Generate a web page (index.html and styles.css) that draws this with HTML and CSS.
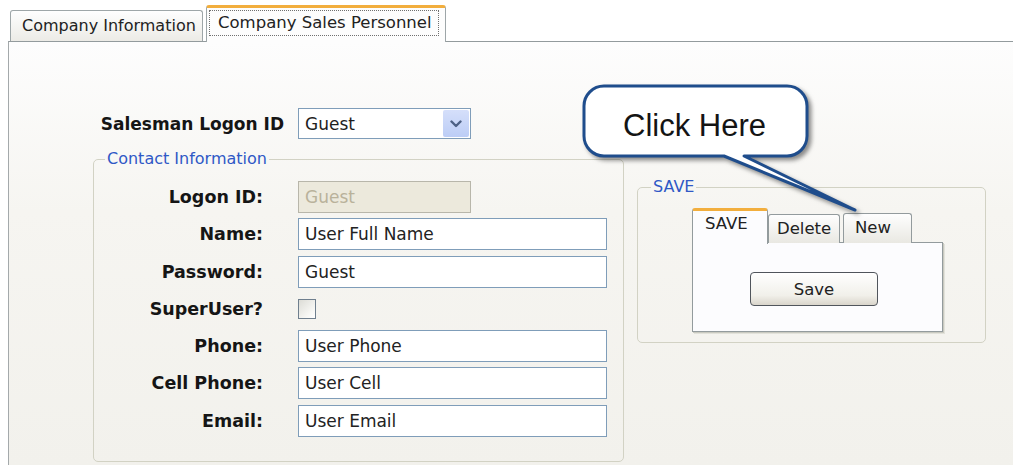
FILE: index.html
```html
<!DOCTYPE html>
<html lang="en">
<head>
<meta charset="utf-8">
<title>Company Sales Personnel</title>
<link rel="stylesheet" href="styles.css">
</head>
<body>
<div class="window">
  <div class="tabstrip">
    <div class="tab">Company Information</div>
    <div class="tab tab-active"><span class="focus">Company Sales Personnel</span></div>
  </div>

  <div class="page">
    <div class="left">
      <div class="logon-row">
        <label class="big-label">Salesman Logon ID</label>
        <div class="combo">
          <span class="combo-text">Guest</span>
          <span class="combo-btn">
            <svg width="12" height="8" viewBox="0 0 12 8"><path d="M1.5 1.5 L6 6 L10.5 1.5" fill="none" stroke="#4d6185" stroke-width="2.4" stroke-linecap="round" stroke-linejoin="round"/></svg>
          </span>
        </div>
      </div>

      <fieldset class="group contact">
        <legend>Contact Information</legend>
        <div class="fields">
          <label>Logon ID:</label>
          <div class="input short disabled">Guest</div>
          <label>Name:</label>
          <div class="input">User Full Name</div>
          <label>Password:</label>
          <div class="input">Guest</div>
          <label>SuperUser?</label>
          <div class="check"></div>
          <label>Phone:</label>
          <div class="input">User Phone</div>
          <label>Cell Phone:</label>
          <div class="input">User Cell</div>
          <label>Email:</label>
          <div class="input">User Email</div>
        </div>
      </fieldset>
    </div>

    <fieldset class="group save-group">
      <legend>SAVE</legend>
      <div class="mtabs">
        <div class="mtab-row">
          <div class="mtab active">SAVE</div>
          <div class="mtab delete">Delete</div>
          <div class="mtab new">New</div>
        </div>
        <div class="mpanel">
          <button class="btn" type="button">Save</button>
        </div>
      </div>
    </fieldset>
  </div>

  <svg class="callout" width="1013" height="465" viewBox="0 0 1013 465">
    <path class="bubble" d="M604 86 H787 A20 20 0 0 1 807 106 V136 A20 20 0 0 1 787 156 H744 L855 210 L724 156 H604 A20 20 0 0 1 584 136 V106 A20 20 0 0 1 604 86 Z"/>
    <text x="623" y="136" class="bubble-text">Click Here</text>
  </svg>
</div>
</body>
</html>
```

FILE: styles.css
```css
body {
  margin: 0;
  background: #ffffff;
  font-family: "DejaVu Sans", "Liberation Sans", sans-serif;
  color: #1e1e1e;
}

.window {
  position: relative;
  width: 1013px;
  height: 465px;
  overflow: hidden;
}

/* top tab strip */
.tabstrip {
  display: flex;
  align-items: flex-end;
  height: 41px;
  padding-left: 10px;
  box-sizing: border-box;
}

.tab {
  box-sizing: border-box;
  height: 31px;
  width: 193px;
  padding-left: 11px;
  border: 1px solid #9ea6a8;
  border-bottom: none;
  border-radius: 3px 3px 0 0;
  background: linear-gradient(#fefefe, #ecebe6);
  font-size: 16px;
  line-height: 29px;
  color: #222;
  white-space: nowrap;
}

.tab-active {
  position: relative;
  z-index: 1;
  width: 240px;
  height: 37px;
  margin-left: 3px;
  margin-bottom: -1px;
  padding-left: 3px;
  border-top: 3px solid #f2ae3d;
  background: #fdfdfd;
  line-height: 30px;
}

.focus {
  display: inline-block;
  padding: 0 6px 0 8px;
  line-height: 24px;
  outline: 1px dotted #707070;
  font-size: 16.5px;
}

/* tab page */
.page {
  position: relative;
  display: flex;
  align-items: flex-start;
  box-sizing: border-box;
  height: 424px;
  margin-left: 8px;
  padding: 66px 0 0 84px;
  border-left: 1px solid #a4a9ab;
  border-top: 1px solid #939b9d;
  background: linear-gradient(#fdfdfd, #f6f5f1 40%, #f2f1ec);
}

.left {
  display: flex;
  flex-direction: column;
  width: 531px;
}

.logon-row {
  display: flex;
  align-items: center;
  gap: 14px;
  height: 31px;
}

.big-label,
.fields label {
  font-weight: bold;
  font-size: 17.5px;
  color: #151515;
  text-align: right;
  white-space: nowrap;
}

.big-label {
  width: 191px;
  font-size: 17px;
}

.combo {
  display: flex;
  align-items: center;
  box-sizing: border-box;
  width: 173px;
  height: 31px;
  padding: 0 1px 0 6px;
  border: 1px solid #7f9db9;
  background: #fff;
}

.combo-text {
  flex: 1;
  font-size: 17px;
}

.combo-btn {
  display: flex;
  align-items: center;
  justify-content: center;
  width: 26px;
  height: 27px;
  border-radius: 2px;
  background: linear-gradient(#d5dffa, #bccdf6);
}

/* group boxes */
.group {
  margin: 0;
  min-width: 0;
  box-sizing: border-box;
  border: 1px solid #d2d2c4;
  border-radius: 5px;
}

.group legend {
  margin-left: 11px;
  padding: 0 2px;
  font-size: 16px;
  line-height: 22px;
  color: #2f58c6;
}

.contact {
  width: 531px;
  margin-top: 9px;
  padding: 11px 0 24px 0;
}

.fields {
  display: grid;
  grid-template-columns: 169px auto;
  grid-auto-rows: 32px;
  column-gap: 35px;
  row-gap: 5.3px;
  align-items: center;
  justify-items: start;
}

.fields label {
  justify-self: end;
}

.input {
  box-sizing: border-box;
  width: 309px;
  height: 32px;
  padding-left: 6px;
  border: 1px solid #7f9db9;
  background: #fff;
  font-size: 17px;
  line-height: 30px;
  color: #222;
}

.input.short {
  width: 173px;
}

.input.disabled {
  border-color: #b8b6aa;
  background: #ece9dc;
  color: #b9b29b;
}

.check {
  box-sizing: border-box;
  width: 18px;
  height: 20px;
  border: 1px solid #6f7f8e;
  background: linear-gradient(135deg, #dcdcd6, #f7f7f4 70%, #ffffff);
}

/* SAVE group */
.save-group {
  width: 349px;
  margin-left: 13px;
  margin-top: 68px;
  padding: 10px 0 10px 0;
}

.save-group legend {
  margin-left: 13px;
}

.mtabs {
  margin-left: 54px;
}

.mtab-row {
  display: flex;
  align-items: flex-end;
  height: 35px;
}

.mtab {
  box-sizing: border-box;
  height: 29px;
  border: 1px solid #939b9d;
  border-bottom: none;
  border-radius: 3px 3px 0 0;
  background: linear-gradient(#fefefe, #e9e8e2);
  font-size: 16.5px;
  line-height: 27px;
  color: #222;
}

.mtab.active {
  position: relative;
  z-index: 1;
  width: 76px;
  height: 36px;
  margin-bottom: -1px;
  padding-left: 12px;
  border-top: 3px solid #f2ae3d;
  background: #fcfcfe;
  line-height: 26px;
}

.mtab.delete {
  width: 72px;
  padding-left: 8px;
}

.mtab.new {
  width: 69px;
  height: 30px;
  margin-left: 3px;
  padding-left: 11px;
}

.mpanel {
  box-sizing: border-box;
  width: 251px;
  height: 90px;
  margin-top: -1px;
  padding: 29px 0 0 57px;
  border: 1px solid #939b9d;
  background: #fcfcfe;
  box-shadow: 1px 1px 0 #c9c9c0, 2px 2px 0 #e2e2da;
}

.btn {
  box-sizing: border-box;
  width: 128px;
  height: 34px;
  border: 1px solid #50555c;
  border-radius: 4px;
  background: linear-gradient(#ffffff, #f1f0ea 70%, #d9d5cb);
  font-family: "DejaVu Sans", "Liberation Sans", sans-serif;
  font-size: 16.5px;
  color: #222;
  padding: 0;
}

/* callout bubble drawn over the form */
.callout {
  position: absolute;
  left: 0;
  top: 0;
  pointer-events: none;
}

.bubble {
  fill: #ffffff;
  stroke: #1f4d8c;
  stroke-width: 3;
  stroke-linejoin: round;
  filter: drop-shadow(3px 3px 2px rgba(50, 50, 50, 0.55));
}

.bubble-text {
  font-family: "Liberation Sans", Arial, sans-serif;
  font-size: 31px;
  fill: #141414;
}
```
